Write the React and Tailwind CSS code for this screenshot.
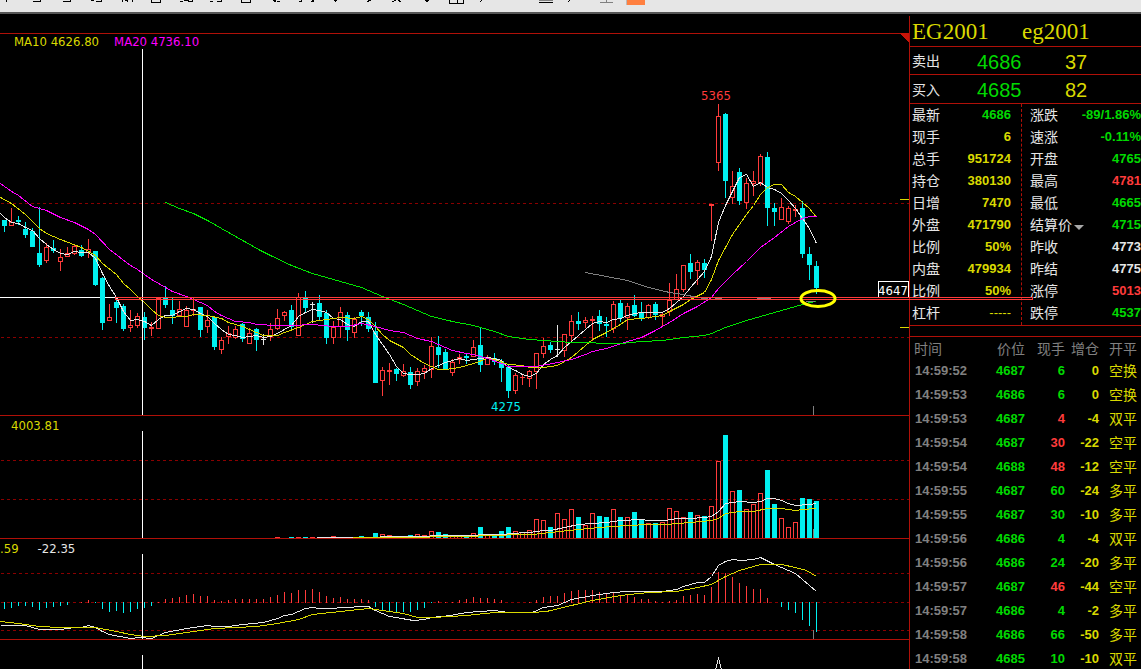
import React from 'react';

/**
 * Futures quote screen: K-line, volume and MACD panes on the left,
 * quote board and tick list on the right.
 */

const RED = '#ff3b3b';
const CYAN = '#00f0f0';
const WHITE = '#e6e6e6';
const YELLOW = '#d9d900';
const MAGENTA = '#ff00ff';
const GREEN = '#00e600';
const DARK_RED = '#8a0000';

// distance between two bars and centre of the first one
const STEP = 7;
const FIRST = 4;
const barX = (index) => FIRST + index * STEP;

// [direction, high, body top, body bottom, low]
const CANDLES = [
  ['d', 220, 220, 226, 232], ['u', 208, 222, 226, 226], ['d', 216, 220, 222, 225], ['d', 222, 229, 235, 238],
  ['d', 228, 231, 247, 247], ['d', 207, 253, 265, 267], ['u', 243, 247, 261, 263], ['d', 240, 248, 251, 253],
  ['u', 249, 257, 262, 271], ['u', 247, 253, 257, 257], ['u', 245, 246, 254, 255], ['d', 245, 250, 256, 257],
  ['u', 239, 249, 253, 258], ['d', 251, 251, 285, 286], ['d', 277, 278, 323, 330], ['u', 304, 317, 321, 321],
  ['d', 299, 302, 308, 323], ['d', 304, 306, 329, 331], ['u', 310, 325, 328, 332], ['u', 313, 316, 326, 328],
  ['d', 312, 317, 328, 340], ['u', 322, 327, 329, 336], ['u', 298, 298, 329, 329], ['d', 286, 297, 305, 308],
  ['d', 298, 310, 316, 324], ['u', 301, 309, 316, 316], ['u', 306, 310, 327, 327], ['u', 298, 309, 311, 316],
  ['d', 307, 307, 330, 337], ['u', 310, 320, 327, 333], ['d', 316, 317, 347, 350], ['u', 337, 340, 350, 354],
  ['u', 326, 333, 337, 344], ['u', 326, 329, 338, 339], ['d', 323, 324, 339, 342], ['u', 328, 333, 344, 344],
  ['d', 328, 329, 340, 351], ['f', 334, 339, 340, 345], ['u', 323, 329, 337, 341], ['u', 309, 318, 329, 330],
  ['u', 311, 312, 316, 321], ['d', 305, 310, 327, 330], ['u', 293, 297, 336, 336], ['d', 291, 298, 308, 312],
  ['f', 302, 304, 305, 323], ['d', 295, 303, 317, 321], ['d', 310, 313, 338, 344], ['u', 321, 327, 338, 344],
  ['u', 307, 312, 327, 338], ['d', 312, 315, 330, 341], ['u', 317, 319, 333, 338], ['d', 310, 312, 316, 326],
  ['d', 312, 317, 329, 332], ['d', 322, 331, 383, 383], ['u', 367, 370, 381, 396], ['u', 363, 370, 372, 385],
  ['d', 368, 369, 374, 381], ['u', 364, 371, 376, 377], ['d', 367, 372, 385, 389], ['u', 368, 371, 382, 386],
  ['u', 365, 368, 372, 379], ['u', 337, 346, 370, 378], ['d', 336, 347, 355, 368], ['d', 349, 352, 370, 370],
  ['u', 359, 362, 373, 376], ['u', 354, 357, 360, 364], ['d', 354, 356, 358, 364], ['u', 340, 347, 357, 357],
  ['d', 328, 345, 365, 372], ['u', 355, 357, 365, 365], ['d', 353, 358, 362, 365], ['d', 359, 361, 368, 382],
  ['d', 364, 367, 391, 398], ['u', 373, 375, 391, 394], ['u', 374, 377, 378, 385], ['u', 370, 371, 379, 387],
  ['u', 353, 353, 372, 389], ['u', 338, 346, 354, 358], ['d', 342, 345, 350, 353], ['f', 325, 349, 350, 357],
  ['u', 334, 334, 351, 357], ['u', 315, 321, 336, 342], ['d', 312, 321, 324, 330], ['u', 317, 320, 323, 328],
  ['u', 316, 319, 321, 341], ['d', 310, 316, 324, 331], ['d', 317, 324, 326, 337], ['u', 301, 304, 329, 333],
  ['d', 300, 303, 318, 322], ['u', 303, 306, 318, 330], ['d', 295, 305, 316, 317], ['d', 302, 312, 318, 321],
  ['u', 304, 305, 318, 319], ['d', 302, 304, 315, 320], ['u', 313, 314, 317, 326], ['u', 283, 300, 312, 316],
  ['u', 274, 289, 300, 300], ['u', 265, 265, 290, 292], ['d', 254, 263, 272, 279], ['u', 260, 262, 271, 285],
  ['d', 259, 263, 270, 278], ['u', 204, 204, 206, 241], ['u', 104, 116, 163, 171], ['d', 113, 114, 181, 198],
  ['u', 171, 186, 198, 204], ['d', 168, 172, 201, 205], ['u', 178, 183, 203, 209], ['u', 171, 181, 184, 196],
  ['u', 154, 156, 183, 186], ['d', 152, 157, 208, 226], ['d', 203, 208, 212, 226], ['u', 198, 207, 220, 220],
  ['u', 206, 208, 222, 224], ['u', 205, 209, 211, 217], ['d', 201, 208, 254, 258], ['d', 247, 254, 265, 280],
  ['d', 261, 266, 288, 294],
];

// top of each volume bar, starting with bar 39
const VOLUME_START = 39;
const VOLUME_BASE = 538;
const VOLUME_TOPS = [
  537, 538, 537, 537, 537, 537, 537, 538, 536, 538, 538, 538, 536, 538, 533, 534, 535, 537, 538,
  535, 534, 535, 531, 532, 534, 536, 536, 536, 533, 527, 535, 535, 531, 527, 531, 532, 530,
  519, 520, 527, 513, 519, 509, 517, 525, 513, 516, 517, 509, 517, 517, 512, 519, 523, 523,
  522, 508, 511, 517, 512, 515, 516, 506, 461, 435, 491, 490, 509, 504, 493, 470, 504, 518,
  527, 522, 498, 499, 501,
];

// MACD histogram, pixels above (+) or below (-) the zero line
const MACD_ZERO = 602;
const MACD_BARS = [
  -7, -6, -4, -4, -5, -8, -6, -5, -4, -3, 0, 1, 3, -1, -7, -10, -9, -11, -10, -7, -6, -4, 1, 4, 5, 6,
  8, 9, 7, 7, 3, 2, 3, 4, 4, 4, 4, 4, 6, 8, 11, 10, 13, 13, 14, 11, 7, 5, 6, 4, 4, 4, 3, -5, -8, -9,
  -10, -10, -10, -8, -6, -1, 2, 1, 1, 3, 4, 6, 5, 5, 4, 3, 0, 0, 0, 1, 3, 6, 7, 7, 10, 12, 13, 13,
  13, 11, 9, 10, 8, 8, 6, 4, 4, 2, 1, 2, 3, 7, 8, 9, 8, 16, 31, 30, 26, 20, 17, 14, 14, 5, 0, -5,
  -8, -11, -18, -24, -30,
];

const MA5 = '0,213 4,217 11,222 18,223 25,227 32,230 39,238 46,244 53,249 60,253 67,254 74,251 81,252 88,252 95,258 102,273 109,286 116,297 123,311 130,320 137,319 144,321 151,325 158,319 165,315 172,315 179,311 186,308 193,309 200,313 207,316 214,323 221,329 228,334 235,335 242,337 249,336 256,335 263,337 270,336 277,333 284,329 291,325 298,316 305,312 312,309 319,310 326,312 333,318 340,319 347,324 354,326 361,321 368,321 375,334 382,344 389,354 396,366 403,373 410,374 417,374 424,373 431,368 438,365 445,362 452,360 459,358 466,360 473,359 480,358 487,357 494,358 501,360 508,367 515,370 522,374 529,376 536,373 543,364 550,359 557,355 564,347 571,341 578,335 585,329 592,323 599,321 606,322 613,319 620,318 627,315 634,313 641,312 662,312 669,308 676,302 683,296 690,287 697,279 704,271 711,256 718,222 725,205 732,191 739,177 746,174 753,186 760,182 767,187 774,189 781,193 788,200 795,208 802,218 809,228 816,243';
const MA10 = '0,197 11,203 25,214 39,228 46,233 60,239 81,247 88,251 95,255 102,263 116,274 123,283 130,289 137,296 144,302 151,309 158,315 165,317 186,316 193,314 207,315 221,318 228,322 242,326 256,332 263,335 277,335 284,332 298,327 312,321 326,319 340,317 354,318 361,316 368,319 375,326 382,334 389,340 403,347 410,354 424,363 431,366 438,369 445,369 459,367 473,363 487,358 494,359 508,364 522,365 529,367 543,367 557,365 564,361 571,357 578,351 585,345 592,339 606,332 620,324 627,319 641,318 662,315 669,311 683,304 690,299 704,292 711,279 718,260 732,234 746,214 753,205 760,194 767,187 774,184 781,184 788,192 795,196 802,202 809,208 816,217';
const MA20 = '0,183 11,191 18,195 32,206 39,208 46,210 60,217 74,222 88,229 95,234 109,249 130,265 137,269 151,279 165,287 172,291 186,296 193,299 207,305 214,311 221,315 235,321 249,322 256,324 277,325 291,325 312,324 333,326 347,326 361,323 375,326 389,330 403,332 417,338 431,341 452,350 466,353 473,354 487,358 501,363 508,366 536,366 557,362 571,359 585,354 592,351 606,348 627,341 641,337 655,330 669,322 683,313 697,306 711,297 718,288 732,274 746,261 760,247 774,237 788,226 802,218 809,216 816,216';
const MA60 = '165,202 179,208 193,213 207,220 228,232 260,250 270,255 291,265 312,273 333,279 361,287 382,296 403,304 431,316 452,321 473,325 494,331 508,336 529,339 543,340 571,342 620,343 641,341 662,340 669,339 683,337 704,335 711,333 725,327 746,320 767,314 788,308 802,304 809,302 816,301';
const MA120 = '585,272 606,276 627,280 648,287 669,292 683,294 697,297 704,298';

const VOL5 = '316,537 379,537 380,536 428,536 431,535 476,535 480,534 505,534 508,533 529,532 543,530 550,530 564,527 578,524 592,523 606,522 620,520 641,519 648,520 665,520 676,518 690,518 704,517 711,516 718,511 725,503 739,501 753,502 760,501 767,498 774,498 781,500 788,503 795,505 809,504 816,503';
const VOL10 = '352,537 428,537 431,536 476,536 480,535 505,535 508,534 532,534 550,532 578,529 599,527 627,525 648,524 665,524 690,522 711,520 718,518 725,513 739,511 753,511 767,508 781,508 795,510 802,509 816,508';

const DIF = '0,625 25,625 32,627 39,629 60,629 74,627 81,627 88,625 95,627 102,631 109,634 130,638 140,637 151,638 165,632 186,628 207,625 214,626 228,626 242,624 263,622 277,618 284,615 291,614 305,608 312,607 319,608 333,608 340,607 368,606 375,610 389,616 413,620 424,619 431,617 450,615 466,612 494,610 508,612 532,612 543,607 557,605 571,599 592,595 613,592 627,591 662,591 676,589 683,586 697,582 704,582 711,576 718,565 725,561 732,559 741,560 753,559 760,557 774,564 788,570 795,573 809,585 816,591';
const DEA = '0,621 18,623 39,626 60,627 95,627 116,631 130,634 144,636 165,635 186,632 214,628 256,626 277,623 298,619 312,614 340,611 368,608 382,610 403,613 417,617 431,617 450,616 466,615 494,612 532,612 546,611 571,605 592,600 620,595 648,592 676,591 697,587 711,584 725,576 739,570 760,564 781,564 795,567 806,570 816,576';

const QUOTES_LEFT = [
  ['最新', '4686', 'text-[#00d900]'],
  ['现手', '6', 'text-[#d9d900]'],
  ['总手', '951724', 'text-[#d9d900]'],
  ['持仓', '380130', 'text-[#d9d900]'],
  ['日增', '7470', 'text-[#d9d900]'],
  ['外盘', '471790', 'text-[#d9d900]'],
  ['比例', '50%', 'text-[#d9d900]'],
  ['内盘', '479934', 'text-[#d9d900]'],
  ['比例', '50%', 'text-[#d9d900]'],
  ['杠杆', '-----', 'text-[#d9d900] font-normal'],
];

const QUOTES_RIGHT = [
  ['涨跌', '-89/1.86%', 'text-[#00d900]'],
  ['速涨', '-0.11%', 'text-[#00d900]'],
  ['开盘', '4765', 'text-[#00d900]'],
  ['最高', '4781', 'text-[#ff3b3b]'],
  ['最低', '4665', 'text-[#00d900]'],
  ['结算价', '4715', 'text-[#00d900]'],
  ['昨收', '4773', 'text-[#e6e6e6]'],
  ['昨结', '4775', 'text-[#e6e6e6]'],
  ['涨停', '5013', 'text-[#ff3b3b]'],
  ['跌停', '4537', 'text-[#00d900]'],
];

// [time, price, volume, volume is red, position change, kind]
const TICKS = [
  ['14:59:52', '4687', '6', false, '0', '空换'],
  ['14:59:53', '4686', '6', false, '0', '空换'],
  ['14:59:53', '4687', '4', true, '-4', '双平'],
  ['14:59:54', '4687', '30', true, '-22', '空平'],
  ['14:59:54', '4688', '48', true, '-12', '空平'],
  ['14:59:55', '4687', '60', false, '-24', '多平'],
  ['14:59:55', '4687', '30', false, '-10', '多平'],
  ['14:59:56', '4686', '4', false, '-4', '双平'],
  ['14:59:56', '4686', '24', false, '-20', '多平'],
  ['14:59:57', '4687', '46', true, '-44', '空平'],
  ['14:59:57', '4686', '4', false, '-2', '多平'],
  ['14:59:58', '4686', '66', false, '-50', '多平'],
  ['14:59:58', '4685', '10', false, '-10', '双平'],
];

const Line = ({ points, color }) => (
  <polyline points={points} fill="none" stroke={color} strokeWidth="1" transform="translate(0.5 0.5)" />
);

const GridLine = ({ y }) => (
  <line x1="1" x2="100%" y1={y + 0.5} y2={y + 0.5} stroke={DARK_RED} strokeDasharray="3 3" />
);

const Candle = ({ index, data }) => {
  const [kind, high, top, bottom, low] = data;
  const x = barX(index);

  if (kind === 'u') {
    return (
      <g>
        {top > high && <rect x={x} y={high} width="1" height={top - high} fill={RED} />}
        {low > bottom && <rect x={x} y={bottom} width="1" height={low - bottom} fill={RED} />}
        {bottom - top > 2 ? (
          <rect x={x - 1.5} y={top + 0.5} width="4" height={bottom - top - 1} fill="#000" stroke={RED} />
        ) : (
          <rect x={x - 2} y={top} width="5" height={bottom - top} fill={RED} />
        )}
      </g>
    );
  }

  const color = kind === 'd' ? CYAN : WHITE;
  return (
    <g fill={color}>
      <rect x={x} y={high} width="1" height={low - high} />
      <rect x={x - 2} y={top} width="5" height={bottom - top} />
    </g>
  );
};

const VolumeBar = ({ index, top }) => {
  const x = barX(index);
  const height = VOLUME_BASE - top;
  if (height <= 0) return null;
  if (CANDLES[index][0] === 'd') {
    return <rect x={x - 2} y={top} width="5" height={height} fill={CYAN} />;
  }
  return (
    <path
      d={`M${x - 1.5} ${VOLUME_BASE}V${top + 0.5}H${x + 2.5}V${VOLUME_BASE}`}
      fill="none"
      stroke={RED}
    />
  );
};

/**
 * One pane of the chart: a legend row and the plot under it.
 * Shapes are given in screen rows, `origin` is the row where the plot starts.
 */
const Pane = ({ origin, legend, plotClass, className = '', children }) => (
  <section className={`flex flex-col border-[#b01008] ${className}`}>
    <div className="flex h-[15px] shrink-0 items-center gap-[15px] whitespace-pre font-['DejaVu_Sans_Condensed','Noto_Sans',sans-serif] text-[13px] leading-[15px]">
      {legend}
    </div>
    <svg className={`block w-full ${plotClass}`} shapeRendering="crispEdges">
      <g transform={`translate(0 ${-origin})`}>
        {children}
        <rect x="142" y={origin} width="1" height="400" fill="#fff" />
      </g>
    </svg>
  </section>
);

const Toolbar = () => (
  <header className="h-[14px] shrink-0 border-b-2 border-[#555] bg-[#e6e6e6]">
    <svg className="block h-3 w-full" shapeRendering="crispEdges" fill="none" stroke="#000">
      <path d="M6.5 0v2M33 1.5h7.5v-1.5M63 1.5h7.5v-1.5M91 .5h3M96 1.5h5.5v-1.5M122.5 0v2M127.5 0v2M132.5 0v2M125 .5h3" />
      <path d="M151.5 0v2.500h9v-2.500M180 1.500h2v-1M184 .5h5M188 1.500h4v-1.500M210 1.500h2v-1M217 1.500h4v-1.500M241.500 0v2.500h9v-2.500" />
      <path d="M273 .5h3M274 1.500h2M277 1.500h3M299 1.500h2v-1.500M311 1.500h3M312 .5h2M334 .5h3M335 1.500h1M367 1.500h2M368 .5h3" />
      <path d="M392 1.500h2M394 .5h2M398 .5h2M399 1.500h2M425 .5h4M426 1.500h2M480 1.500h1M481 .5h1M568 1.500h1M569 .5h1" />
      <path d="M449.500 0v3.500h14v-3.500M457.500 0v3M539 2.500h14" />
      <path d="M539 .5h14M600 2.500h13M606.500 0v2" stroke="#808080" />
      <rect x="627" y="0" width="18" height="5" fill="#ff8040" stroke="none" />
      <path d="M626.500 0v5" stroke="#bbb" />
    </svg>
  </header>
);

const ChartArea = () => (
  <div className="mt-[19px] flex min-w-0 flex-1 flex-col">
    <Pane
      origin={49}
      plotClass="h-[366px]"
      className="border-y"
      legend={
        <>
          <span className="pl-[14px] text-[#d9d900]">MA10 4626.80</span>
          <span className="text-[#ff00ff]">MA20 4736.10</span>
        </>
      }
    >
      <GridLine y={203} />
      <GridLine y={337} />
      <rect x="0" y="297" width="115" height="1" fill="#fff" />
      {CANDLES.map((data, index) => (
        <Candle key={index} index={index} data={data} />
      ))}
      <Line points={MA5} color={WHITE} />
      <Line points={MA10} color={YELLOW} />
      <Line points={MA20} color={MAGENTA} />
      <Line points={MA60} color={GREEN} />
      <Line points={MA120} color="#808080" />
      <rect x="813" y="406" width="1" height="9" fill="#808080" />
      <g fontFamily="'DejaVu Sans Condensed', 'Noto Sans', sans-serif" fontSize="13" textAnchor="middle">
        <text x="716" y="100" fill={RED}>5365</text>
        <text x="506" y="411" fill={CYAN}>4275</text>
      </g>
      <svg x="100%" y="0" overflow="visible">
        <rect x="-9" y="199" width="9" height="1" fill={YELLOW} />
        <rect x="-9" y="327" width="9" height="1" fill={YELLOW} />
      </svg>
    </Pane>

    <Pane
      origin={431}
      plotClass="h-[107px]"
      className="border-b"
      legend={<span className="pl-[11px] pt-[3px] text-[#d9d900]">4003.81</span>}
    >
      <GridLine y={460} />
      <GridLine y={499} />
      {VOLUME_TOPS.map((top, i) => (
        <VolumeBar key={i} index={VOLUME_START + i} top={top} />
      ))}
      <Line points={VOL5} color={WHITE} />
      <Line points={VOL10} color={YELLOW} />
      <rect x="813" y="529" width="1" height="9" fill="#808080" />
    </Pane>

    <Pane
      origin={554}
      plotClass="h-[85px]"
      className="border-b"
      legend={
        <>
          <span className="pt-[3px] text-[#d9d900]">.59</span>
          <span className="pl-1 pt-[3px] text-[#e6e6e6]">-22.35</span>
        </>
      }
    >
      <GridLine y={573} />
      <GridLine y={602} />
      <GridLine y={630} />
      {MACD_BARS.map((value, index) => (
        <rect
          key={index}
          x={barX(index)}
          y={value > 0 ? MACD_ZERO - value + 1 : MACD_ZERO}
          width="1"
          height={Math.abs(value)}
          fill={value > 0 ? RED : CYAN}
        />
      ))}
      <Line points={DIF} color={WHITE} />
      <Line points={DEA} color={YELLOW} />
      <rect x="813" y="630" width="1" height="9" fill="#808080" />
    </Pane>

    <Pane origin={655} plotClass="min-h-0 flex-1" className="min-h-0 flex-1" legend={null}>
      <Line points="715,669 718,658 721,669" color={WHITE} />
    </Pane>
  </div>
);

const BigQuote = ({ label, price, volume, className }) => (
  <div className={`flex items-center border-b border-[#b01008] pl-0.5 ${className}`}>
    <span className="w-[65px] text-[14px]">{label}</span>
    <span className="w-[88px] pt-0.5 font-['Liberation_Sans',Arial,sans-serif] text-[20px] leading-6 text-[#00d900]">{price}</span>
    <span className="pt-0.5 font-['Liberation_Sans',Arial,sans-serif] text-[20px] leading-6 text-[#d9d900]">{volume}</span>
  </div>
);

const QuoteList = ({ rows, className }) => (
  <dl className={className}>
    {rows.map(([label, value, color], i) => (
      <div key={i} className="flex h-[22px] items-center justify-between">
        <dt className="flex items-center pb-0.5 text-[14px] leading-5">
          {label}
          {label === '结算价' && (
            <button type="button" aria-label="结算价" className="ml-0.5 mt-1.5 border-x-[5px] border-t-[5px] border-x-transparent border-t-[#a8a8a8]" />
          )}
        </dt>
        <dd className={`font-['Liberation_Sans',Arial,sans-serif] text-[13px] font-bold ${color}`}>{value}</dd>
      </div>
    ))}
  </dl>
);

const TickTable = () => (
  <table className="w-full table-fixed border-t border-[#b01008] text-right font-['Liberation_Sans','Noto_Sans_CJK_SC',sans-serif] text-[13px]">
    <colgroup>
      <col className="w-[70px]" />
      <col className="w-[45px]" />
      <col className="w-10" />
      <col className="w-[34px]" />
      <col />
    </colgroup>
    <thead>
      <tr className="h-[22px] text-[14px] leading-5 text-[#808080]">
        <th className="p-0 pl-1 pt-0.5 text-left font-normal">时间</th>
        <th className="p-0 pt-0.5 font-normal">价位</th>
        <th className="p-0 pt-0.5 font-normal">现手</th>
        <th className="p-0 pt-0.5 font-normal">增仓</th>
        <th className="p-0 pl-2.5 pt-0.5 text-left font-normal">开平</th>
      </tr>
    </thead>
    <tbody>
      {TICKS.map(([time, price, volume, isRed, change, kind], i) => (
        <tr key={i} className="h-6 font-bold">
          <td className="p-0 pl-[5px] text-left text-[#808080]">{time}</td>
          <td className="p-0 text-[#00d900]">{price}</td>
          <td className={`p-0 ${isRed ? 'text-[#ff3b3b]' : 'text-[#00d900]'}`}>{volume}</td>
          <td className="p-0 text-[#d9d900]">{change}</td>
          <td className="p-0 pl-2.5 text-left text-[14px] font-normal leading-5 text-[#d9d900]">{kind}</td>
        </tr>
      ))}
    </tbody>
  </table>
);

const Sidebar = () => (
  <aside className="mt-0.5 w-[232px] shrink-0 overflow-hidden border-l border-[#b01008]">
    <h1 className="flex h-[31px] items-center border-b border-[#b01008] pl-0.5 pt-0.5 font-['Liberation_Serif',serif] text-[23px] leading-7 text-[#d9d900]">
      <span className="w-[110px]">EG2001</span>
      <span>eg2001</span>
    </h1>
    <BigQuote label="卖出" price="4686" volume="37" className="h-7" />
    <BigQuote label="买入" price="4685" volume="82" className="h-[29px]" />
    <div className="flex h-[222px] border-b border-[#b01008]">
      <QuoteList rows={QUOTES_LEFT} className="w-28 border-r border-dashed border-[#b01008] pl-0.5 pr-[10px]" />
      <QuoteList rows={QUOTES_RIGHT} className="flex-1 pl-2" />
    </div>
    <div className="h-2.5" />
    <TickTable />
  </aside>
);

// marks drawn over both the chart and the quote board
const Marks = () => (
  <svg className="pointer-events-none absolute inset-0 h-full w-full">
    <g shapeRendering="crispEdges">
      <path d="M900 19h9v10z" fill="#c81408" />
      <rect x="878.5" y="267.500" width="30" height="16" fill="#000" stroke="#fff" />
      <rect x="115.500" y="283.500" width="917" height="2" fill="none" stroke={RED} />
      <path d="M701 284.500h7M715 284.500h7M757 284.500h14" stroke="#808080" />
    </g>
    <text x="893" y="281" textAnchor="middle" fill="#fff" fontSize="13" fontFamily="'DejaVu Sans Condensed', 'Noto Sans', sans-serif">4647</text>
    <path d="M806 287.500h9" stroke="#808080" />
    <ellipse cx="818" cy="284.500" rx="17" ry="8" fill="none" stroke="#ffff00" strokeWidth="3" />
  </svg>
);

const App = () => (
  <div className="flex h-screen flex-col overflow-hidden bg-black font-['Noto_Sans_CJK_SC',sans-serif] text-[#e6e6e6]">
    <Toolbar />
    <main className="relative flex min-h-0 flex-1">
      <ChartArea />
      <Sidebar />
      <Marks />
    </main>
  </div>
);

export default App;
